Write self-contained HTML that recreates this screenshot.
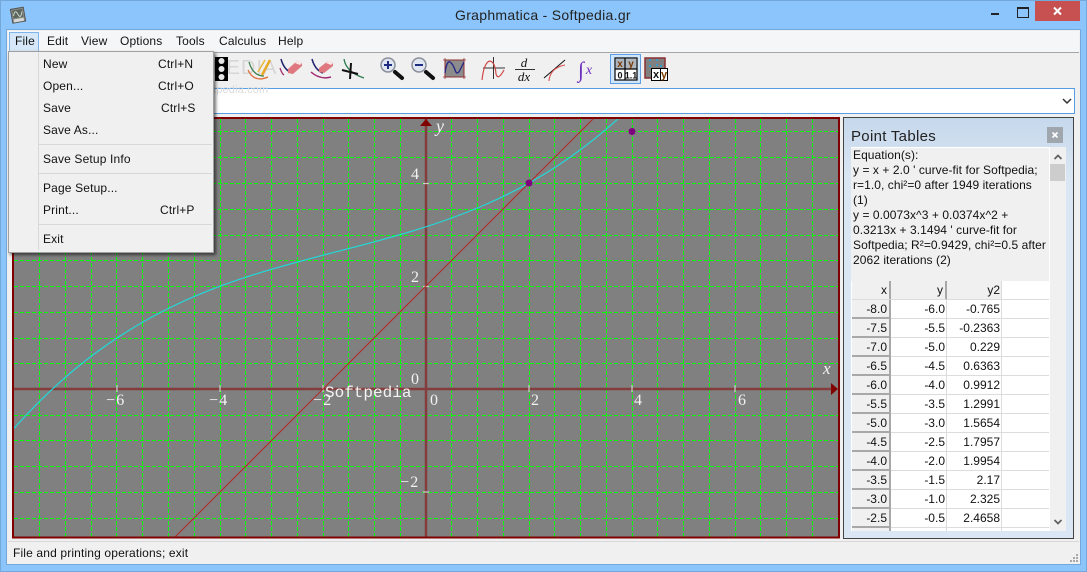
<!DOCTYPE html>
<html><head><meta charset="utf-8"><title>Graphmatica</title>
<style>
html,body{margin:0;padding:0}
body{width:1087px;height:572px;position:relative;overflow:hidden;background:#8cc5fb;font:12px "Liberation Sans",sans-serif;color:#000}
.a{position:absolute}
.t{position:absolute;white-space:nowrap;line-height:16px;letter-spacing:.15px;color:#111}
svg{position:absolute;left:0;top:0}
table{border-collapse:separate;border-spacing:0;table-layout:fixed;width:197px}
td{height:19px;box-sizing:border-box;padding:1px 1px 0 0;vertical-align:top;text-align:right;line-height:16px;border-right:1px solid #dcdcdc;border-bottom:1px solid #dcdcdc;background:#fff;color:#111;overflow:hidden}
td.h{background:#f0f0f0;border-right:1px solid #a8a8a8;border-bottom:1px solid #a8a8a8;box-shadow:inset -1px -1px 0 #a8a8a8;padding-right:3px}
tr.hd td{background:#f0f0f0;border-bottom:1px solid #dcdcdc}
tr.hd td.b{border-right:1px solid #a8a8a8;box-shadow:inset -1px 0 0 #a8a8a8;padding-right:3px}
td.e{border-right:0}
tr.hd td.e{background:#fff}
</style></head>
<body>
<!-- window frame -->
<div class="a" style="left:0;top:0;width:1087px;height:1px;background:#74a8da"></div>
<div class="a" style="left:0;top:0;width:1px;height:572px;background:#74a8da"></div>
<div class="a" style="left:1086px;top:0;width:1px;height:572px;background:#74a8da"></div>
<div class="a" style="left:0;top:571px;width:1087px;height:1px;background:#74a8da"></div>
<div class="a" style="left:7px;top:30px;width:1073px;height:534px;background:#f0f0f0;border:0;box-shadow:0 0 0 1px #74a8da"></div>
<!-- title bar -->
<svg width="40" height="30" viewBox="0 0 40 30">
<g transform="rotate(-10 19 15)">
<rect x="11.500" y="8" width="13" height="14" fill="#8b8f88" stroke="#555"/>
<rect x="13" y="9.500" width="10" height="8" fill="#5c665c"/>
<path d="M13.500 15Q16 8 18 14T22.500 12" fill="none" stroke="#d0d8d0"/>
<rect x="13" y="18.500" width="10" height="3" fill="#d8d8d8"/>
</g></svg>
<div class="t" style="left:455px;top:7px;font-size:14px;letter-spacing:.3px;color:#222">Graphmatica - Softpedia.gr</div>
<div class="a" style="left:991px;top:13px;width:8px;height:2px;background:#222"></div>
<div class="a" style="left:1017px;top:7px;width:10px;height:8px;border:1px solid #222;border-top-width:2px"></div>
<div class="a" style="left:1035px;top:1px;width:45px;height:20px;background:#c75050"></div>
<svg width="1087" height="30" viewBox="0 0 1087 30"><path d="M1054 7.500L1061 14.500M1061 7.500L1054 14.500" stroke="#fff" stroke-width="2"/></svg>
<!-- menu bar -->
<div class="a" style="left:8px;top:31px;width:1071px;height:21px;background:#f5f6f7"></div>
<div class="a" style="left:8px;top:52px;width:1071px;height:1px;background:#a6a6a6"></div>
<div class="a" style="left:9px;top:32px;width:28px;height:18px;background:#d5e7f8;border:1px solid #7eb4ea"></div>
<div class="t" style="left:15px;top:33px">File</div>
<div class="t" style="left:47px;top:33px">Edit</div>
<div class="t" style="left:81px;top:33px">View</div>
<div class="t" style="left:120px;top:33px">Options</div>
<div class="t" style="left:176px;top:33px">Tools</div>
<div class="t" style="left:219px;top:33px">Calculus</div>
<div class="t" style="left:278px;top:33px">Help</div>
<!-- watermark -->
<div class="t" style="left:155px;top:58px;font-size:20px;line-height:20px;letter-spacing:1px;color:#d6d6d6">SOFTPEDIA</div>
<!-- toolbar -->
<div class="a" style="left:610px;top:54px;width:29px;height:28px;background:#cfe6fa;border:1px solid #5ba0e5"></div>
<svg width="1087" height="100" viewBox="0 0 1087 100" style="font-family:'Liberation Sans',sans-serif">
<rect x="215" y="57" width="13" height="24" fill="#000"/>
<circle cx="221.500" cy="61" r="3" fill="#e8e8e8"/><circle cx="221.500" cy="69" r="3" fill="#e8e8e8"/><circle cx="221.500" cy="77" r="3" fill="#e8e8e8"/>
<path d="M249 62Q253 76 264 76" fill="none" stroke="#3d7f4d" stroke-width="1.300"/>
<path d="M248 70Q254 83 268 77" fill="none" stroke="#e0703a" stroke-width="1.300"/>
<path d="M262 75L270 60" stroke="#e8a828" stroke-width="2.500"/>
<path d="M258 72L265 60" stroke="#e8b838" stroke-width="1.500"/>
<path d="M281 59Q284 70 292 73" fill="none" stroke="#24246e" stroke-width="1.500"/>
<path d="M280 68Q282 74 284 75" fill="none" stroke="#a03070" stroke-width="1.300"/>
<path d="M288 69L297 61L302 63L302 66L293 74L288 73Z" fill="#e07880"/>
<path d="M297 61L302 63L300 65L295 63Z" fill="#f8e8e8"/>
<path d="M312 59Q315 70 323 73" fill="none" stroke="#24246e" stroke-width="1.500"/>
<path d="M311 72Q320 80 331 77" fill="none" stroke="#a02870" stroke-width="1.500"/>
<path d="M319 68L328 61L333 63L333 66L324 73L319 72Z" fill="#e07880"/>
<path d="M328 61L333 63L331 65L326 63Z" fill="#f8e8e8"/>
<path d="M344 59Q346 72 364 78" fill="none" stroke="#2c7c50" stroke-width="1.300"/>
<path d="M342 70L358 74M351 63L350 79" stroke="#111" stroke-width="2"/>
<!-- zoom -->
<g>
<path d="M395 72L402 78" stroke="#111" stroke-width="4" stroke-linecap="round"/>
<circle cx="388" cy="65" r="7" fill="#dfe6f2" stroke="#8b8f98" stroke-width="1.500"/>
<path d="M384 65H392M388 61V69" stroke="#1c2c80" stroke-width="2"/>
<path d="M426 72L433 78" stroke="#111" stroke-width="4" stroke-linecap="round"/>
<circle cx="419" cy="65" r="7" fill="#dfe6f2" stroke="#8b8f98" stroke-width="1.500"/>
<path d="M415 65H423" stroke="#1c2c80" stroke-width="2"/>
</g>
<rect x="445" y="60" width="19" height="17" fill="#8c8c8c" stroke="#8a3030" stroke-width="1"/>
<path d="M443 60H466M443 77H466M445 58V79M464 58V79" stroke="#903030" stroke-width=".8"/>
<path d="M445 73Q447 60 450 62T455 70T460 70T464 62" fill="none" stroke="#24248a" stroke-width="1.300"/>
<!-- curve & axes -->
<path d="M483 68H505M493.500 57V79" stroke="#333" stroke-width="1"/>
<path d="M482 80Q484 62 490 61Q495 62 496 74Q498 81 504 70" fill="none" stroke="#d04848" stroke-width="1.200"/>
<text x="524" y="67" font-family="Liberation Serif,serif" font-style="italic" font-size="13" text-anchor="middle" fill="#111">d</text>
<path d="M515 69.500H535" stroke="#333"/>
<text x="524" y="81" font-family="Liberation Serif,serif" font-style="italic" font-size="13" text-anchor="middle" fill="#111">dx</text>
<path d="M544 78L565 60" stroke="#111" stroke-width="1"/>
<path d="M549 81Q550 68 565 65" fill="none" stroke="#e05050" stroke-width="1.100"/>
<text x="581" y="77" font-family="Liberation Serif,serif" font-style="italic" font-size="22" text-anchor="middle" fill="#7030c0">∫</text>
<text x="589" y="74" font-family="Liberation Serif,serif" font-style="italic" font-size="14" text-anchor="middle" fill="#7030c0">x</text>
<!-- table icon -->
<rect x="615" y="58" width="22" height="22" fill="#fff" stroke="#000" stroke-width="1.200"/>
<rect x="615.500" y="58.500" width="21" height="10" fill="#aeb6bf"/>
<path d="M615 69H637M625 58V80" stroke="#000" stroke-width="1.200"/>
<text x="620" y="67" font-size="10" font-weight="bold" text-anchor="middle" fill="#7a3800">x</text>
<text x="631" y="67" font-size="10" font-weight="bold" text-anchor="middle" fill="#7a3800">y</text>
<text x="620" y="78.500" font-size="9" font-weight="bold" text-anchor="middle" fill="#111">0</text>
<text x="631" y="78.500" font-size="9" font-weight="bold" text-anchor="middle" fill="#111">1.1</text>
<rect x="645" y="58" width="20" height="20" fill="#808080" stroke="#8a3030" stroke-width="1.500"/>
<circle cx="650" cy="60" r="1" fill="#20a8e0"/><circle cx="657" cy="60" r="1" fill="#20a8e0"/><circle cx="650" cy="66" r="1" fill="#20a8e0"/><circle cx="657" cy="65" r="1" fill="#20a8e0"/><circle cx="661" cy="66" r="1" fill="#20a8e0"/>
<rect x="651.500" y="68.500" width="16" height="12" fill="#fff" stroke="#000"/>
<path d="M660.500 68.500V80.500" stroke="#000"/>
<text x="656" y="78" font-size="11" font-weight="bold" text-anchor="middle" fill="#111">x</text>
<text x="664" y="78" font-size="11" font-weight="bold" text-anchor="middle" fill="#7a3800">y</text>
</svg>
<!-- input -->
<div class="a" style="left:8px;top:88px;width:1065px;height:24px;background:#fff;border:1px solid #569de5"></div>
<div class="t" style="left:171px;top:84px;font-size:11px;line-height:12px;color:#dcdcdc">www.softpedia.com</div>
<svg width="1087" height="120" viewBox="0 0 1087 120"><path d="M1063 99L1067 103L1071 99" fill="none" stroke="#333" stroke-width="1.500"/></svg>
<!-- plot -->
<svg width="1087" height="572" viewBox="0 0 1087 572">
<defs><clipPath id="c"><rect x="14" y="119" width="824" height="418"/></clipPath></defs>
<rect x="14" y="119" width="824" height="418" fill="#808080"/>
<g clip-path="url(#c)">
<path fill="none" stroke="#00ff00" stroke-width="1" stroke-dasharray="4 2" shape-rendering="crispEdges" d="
M39.500 119V537M65.500 119V537M91.500 119V537M116.500 119V537M142.500 119V537M168.500 119V537M194.500 119V537M220.500 119V537M245.500 119V537M271.500 119V537M297.500 119V537M323.500 119V537M348.500 119V537M374.500 119V537M400.500 119V537M451.500 119V537M477.500 119V537M503.500 119V537M529.500 119V537M554.500 119V537M580.500 119V537M606.500 119V537M632.500 119V537M657.500 119V537M683.500 119V537M709.500 119V537M735.500 119V537M760.500 119V537M786.500 119V537M812.500 119V537
M14 131.500H838M14 157.500H838M14 183.500H838M14 209.500H838M14 235.500H838M14 260.500H838M14 286.500H838M14 312.500H838M14 338.500H838M14 363.500H838M14 415.500H838M14 440.500H838M14 466.500H838M14 492.500H838M14 518.500H838"/>
<path d="M426 119V537" stroke="#843c3c" stroke-width="2.500"/>
<path d="M14 389H832" stroke="#843c3c" stroke-width="2.500"/>
<path d="M529 385V392M632 385V392M735 385V392M117 385V392M220 385V392M323 385V392M423 183.500H429M423 286.500H429M423 492H429" stroke="#c8c8c8" stroke-width="1.300"/>
<path d="M168.500 543.500L632 80" fill="none" stroke="#b82828" stroke-width="1"/>
<g transform="translate(426 389) scale(51.500 -51.500)">
<path d="M-8 -.765C-4 3.733 0 1.6166 4 5.5002" fill="none" stroke="#22d8d8" stroke-width="1.200" vector-effect="non-scaling-stroke"/>
</g>
<circle cx="529" cy="183" r="3.500" fill="#800080"/>
<circle cx="632" cy="131.500" r="3.500" fill="#800080"/>
</g>
<path d="M426 119L420 126H432Z" fill="#800000"/>
<path d="M838 389L831 383V395Z" fill="#800000"/>
<path d="M13 118H839V537.500H13Z" fill="none" stroke="#800000" stroke-width="2"/>
<g font-family="Liberation Serif,serif" font-size="16" fill="#f2f2f2" letter-spacing="1.200">
<text x="106" y="405">−6</text><text x="209" y="405">−4</text><text x="313" y="405">−2</text>
<text x="430" y="405">0</text><text x="531" y="405">2</text><text x="634" y="405">4</text><text x="738" y="405">6</text>
<text x="411" y="179">4</text><text x="411" y="282">2</text><text x="411" y="384">0</text><text x="400" y="487">−2</text>
</g>
<text x="436" y="132" font-family="Liberation Serif,serif" font-style="italic" font-size="18" fill="#f2f2f2">y</text>
<text x="823" y="374" font-family="Liberation Serif,serif" font-style="italic" font-size="17" fill="#f2f2f2">x</text>
<text x="325" y="397" font-family="Liberation Mono,monospace" font-size="16" fill="#f4f4f4">Softpedia</text>
</svg>
<!-- status -->
<div class="a" style="left:8px;top:541px;width:1071px;height:1px;background:#d8d8d8"></div>
<div class="t" style="left:13px;top:545px">File and printing operations; exit</div>
<svg width="1087" height="572" viewBox="0 0 1087 572"><g fill="#a8a8a8"><rect x="1076" y="554" width="2" height="2"/><rect x="1073" y="557" width="2" height="2"/><rect x="1076" y="557" width="2" height="2"/><rect x="1070" y="560" width="2" height="2"/><rect x="1073" y="560" width="2" height="2"/><rect x="1076" y="560" width="2" height="2"/></g></svg>
<!-- panel -->
<div class="a" style="left:843px;top:117px;width:229px;height:420px;border:1px solid #444;background:linear-gradient(#c6d8ec,#dae6f3 60px)"></div>
<div class="t" style="left:851px;top:128px;font-size:15px;line-height:18px;letter-spacing:.3px;color:#222">Point Tables</div>
<div class="a" style="left:1047px;top:127px;width:16px;height:16px;background:#a0a6ae"></div>
<svg width="1087" height="160" viewBox="0 0 1087 160"><path d="M1052.500 132.500L1057.500 137.500M1057.500 132.500L1052.500 137.500" stroke="#fff" stroke-width="1.600"/></svg>
<div class="a" style="left:851px;top:147px;width:215px;height:384px;background:#fff"></div>
<div class="a" style="left:1050px;top:147px;width:16px;height:384px;background:#f0f0f0"></div>
<div class="a" style="left:1050px;top:164px;width:15px;height:17px;background:#cdcdcd"></div>
<svg width="1087" height="572" viewBox="0 0 1087 572"><path d="M1054.500 159L1058 155.500L1061.500 159M1054.500 520L1058 523.500L1061.500 520" fill="none" stroke="#606060" stroke-width="1.700"/></svg>
<div class="a" style="left:851px;top:148px;width:198px;height:133px;background:#f0f0f0;overflow:hidden">
<div style="padding:0 0 0 2px;line-height:15px;color:#111;white-space:nowrap;letter-spacing:.06px">Equation(s):<br>y = x + 2.0 ' curve-fit for Softpedia;<br>r=1.0, chi²=0 after 1949 iterations<br>(1)<br>y = 0.0073x^3 + 0.0374x^2 +<br>0.3213x + 3.1494 ' curve-fit for<br>Softpedia; R²=0.9429, chi²=0.5 after<br>2062 iterations (2)</div>
</div>
<div class="a" style="left:851px;top:281px;width:198px;height:250px;overflow:hidden;background:#fff">
<table style="margin-left:1px">
<colgroup><col style="width:39px"><col style="width:56px"><col style="width:55px"><col style="width:47px"></colgroup>
<tr class="hd" style="height:19px"><td class="b">x</td><td class="b">y</td><td>y2</td><td class="e"></td></tr>
<tr><td class="h">-8.0</td><td>-6.0</td><td>-0.765</td><td class="e"></td></tr>
<tr><td class="h">-7.5</td><td>-5.5</td><td>-0.2363</td><td class="e"></td></tr>
<tr><td class="h">-7.0</td><td>-5.0</td><td>0.229</td><td class="e"></td></tr>
<tr><td class="h">-6.5</td><td>-4.5</td><td>0.6363</td><td class="e"></td></tr>
<tr><td class="h">-6.0</td><td>-4.0</td><td>0.9912</td><td class="e"></td></tr>
<tr><td class="h">-5.5</td><td>-3.5</td><td>1.2991</td><td class="e"></td></tr>
<tr><td class="h">-5.0</td><td>-3.0</td><td>1.5654</td><td class="e"></td></tr>
<tr><td class="h">-4.5</td><td>-2.5</td><td>1.7957</td><td class="e"></td></tr>
<tr><td class="h">-4.0</td><td>-2.0</td><td>1.9954</td><td class="e"></td></tr>
<tr><td class="h">-3.5</td><td>-1.5</td><td>2.17</td><td class="e"></td></tr>
<tr><td class="h">-3.0</td><td>-1.0</td><td>2.325</td><td class="e"></td></tr>
<tr><td class="h">-2.5</td><td>-0.5</td><td>2.4658</td><td class="e"></td></tr>
<tr><td class="h"></td><td></td><td></td><td class="e"></td></tr>
</table>
</div>
<!-- file menu -->
<div class="a" style="left:8px;top:51px;width:204px;height:200px;background:#f0f0f0;border:1px solid #a0a0a0;box-shadow:2px 2px 3px rgba(0,0,0,.55)"></div>
<div class="a" style="left:38px;top:52px;width:1px;height:198px;background:#d8d8d8"></div>
<div class="a" style="left:39px;top:144px;width:173px;height:1px;background:#d8d8d8"></div>
<div class="a" style="left:39px;top:173px;width:173px;height:1px;background:#d8d8d8"></div>
<div class="a" style="left:39px;top:224px;width:173px;height:1px;background:#d8d8d8"></div>
<div class="t" style="left:43px;top:56px">New</div><div class="t" style="left:158px;top:56px">Ctrl+N</div>
<div class="t" style="left:43px;top:78px">Open...</div><div class="t" style="left:158px;top:78px">Ctrl+O</div>
<div class="t" style="left:43px;top:100px">Save</div><div class="t" style="left:161px;top:100px">Ctrl+S</div>
<div class="t" style="left:43px;top:122px">Save As...</div>
<div class="t" style="left:43px;top:151px">Save Setup Info</div>
<div class="t" style="left:43px;top:180px">Page Setup...</div>
<div class="t" style="left:43px;top:202px">Print...</div><div class="t" style="left:160px;top:202px">Ctrl+P</div>
<div class="t" style="left:43px;top:231px">Exit</div>
</body></html>
